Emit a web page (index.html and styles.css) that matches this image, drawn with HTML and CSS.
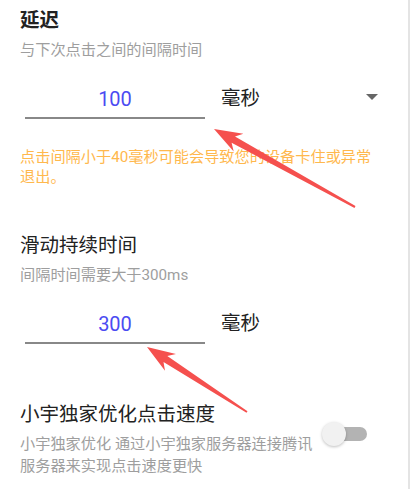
FILE: index.html
```html
<!DOCTYPE html>
<html>
<head>
  <title>点击设置</title>
  <link rel="stylesheet" href="styles.css">
</head>
<body>
  <div class="panel">
    <!-- 延迟 -->
    <div class="section">
      <div class="section-title bold">延迟</div>
      <div class="section-sub">与下次点击之间的间隔时间</div>
      <div class="input-row">
        <div class="num-input">100</div>
        <div class="unit">毫秒</div>
        <div class="dropdown"></div>
      </div>
      <div class="warning">点击间隔小于40毫秒可能会导致您的设备卡住或异常退出。</div>
    </div>

    <!-- 滑动持续时间 -->
    <div class="section section-gap">
      <div class="section-title">滑动持续时间</div>
      <div class="section-sub">间隔时间需要大于300ms</div>
      <div class="input-row">
        <div class="num-input">300</div>
        <div class="unit">毫秒</div>
      </div>
    </div>

    <!-- 小宇独家优化 -->
    <div class="section section-gap-sm">
      <div class="section-title">小宇独家优化点击速度</div>
      <div class="switch-row">
        <div class="switch-desc">小宇独家优化&nbsp;通过小宇独家服务器连接腾讯服务器来实现点击速度更快</div>
        <div class="switch">
          <div class="switch-track"></div>
          <div class="switch-thumb"></div>
        </div>
      </div>
    </div>

    <!-- annotation arrows -->
    <svg class="arrows" width="408" height="489" viewBox="0 0 408 489">
      <polygon points="214,129 243.4,133.8 235,136.6 355.5,206.1 354.5,207.9 231.6,142.8 233.7,151.4" />
      <polygon points="147,347 176,353.9 167.3,356.1 247.5,411.2 246.5,412.8 163.5,361.9 165,370.7" />
    </svg>
  </div>
</body>
</html>
```

FILE: styles.css
```css
:root {
  --text: #222222;
  --text-light: #9e9e9e;
  --accent: #4b4bf2;
  --warn: #ffb84d;
  --line: #888888;
  --arrow: #f5504e;
}

body {
  margin: 0;
  background: #ffffff;
  font-family: Roboto, "Noto Sans CJK SC", sans-serif;
  color: var(--text);
}

.panel {
  position: relative;
  width: 410px;
  height: 489px;
  box-sizing: border-box;
  padding: 9px 0 0 20px;
  border-right: 2px solid #e4e4e4;
  overflow: hidden;
}

.section-title {
  font-size: 19.5px;
  line-height: 24px;
  color: var(--text);
}

.section-title.bold {
  font-weight: 700;
}

.section-sub {
  margin-top: 7px;
  font-size: 15.2px;
  line-height: 20px;
  color: var(--text-light);
}

.input-row {
  display: flex;
  align-items: center;
  margin-top: 22px;
  padding-left: 5px;
}

.num-input {
  width: 180px;
  height: 35px;
  line-height: 35px;
  text-align: center;
  font-size: 20px;
  color: var(--accent);
  border-bottom: 2px solid var(--line);
}

.unit {
  margin-left: 16px;
  margin-bottom: 4px;
  font-size: 19.5px;
  line-height: 24px;
  color: var(--text);
}

.dropdown {
  margin-left: auto;
  margin-right: 30px;
  margin-bottom: 8px;
  width: 0;
  height: 0;
  border-left: 6.5px solid transparent;
  border-right: 6.5px solid transparent;
  border-top: 6px solid #666666;
}

.warning {
  margin-top: 28px;
  width: 362px;
  font-size: 15.2px;
  line-height: 20px;
  color: var(--warn);
}

.section-gap {
  margin-top: 47px;
}

.section-gap-sm {
  margin-top: 59px;
}

.switch-row {
  display: flex;
  align-items: flex-start;
  margin-top: 6px;
}

.switch-desc {
  width: 300px;
  font-size: 15.2px;
  line-height: 22px;
  color: var(--text-light);
}

.switch {
  position: relative;
  width: 45px;
  height: 24px;
  margin-left: 2px;
  margin-top: -11px;
}

.switch-track {
  position: absolute;
  left: 8px;
  top: 5px;
  width: 37px;
  height: 14px;
  border-radius: 7px;
  background: #b3b3b3;
}

.switch-thumb {
  position: absolute;
  left: 0;
  top: 0;
  width: 24px;
  height: 24px;
  border-radius: 50%;
  background: #f1f1f1;
  box-shadow: 0 1px 3px rgba(0, 0, 0, 0.25);
}

.arrows {
  position: absolute;
  top: 0;
  left: 0;
  pointer-events: none;
}

.arrows polygon {
  fill: var(--arrow);
}
```
